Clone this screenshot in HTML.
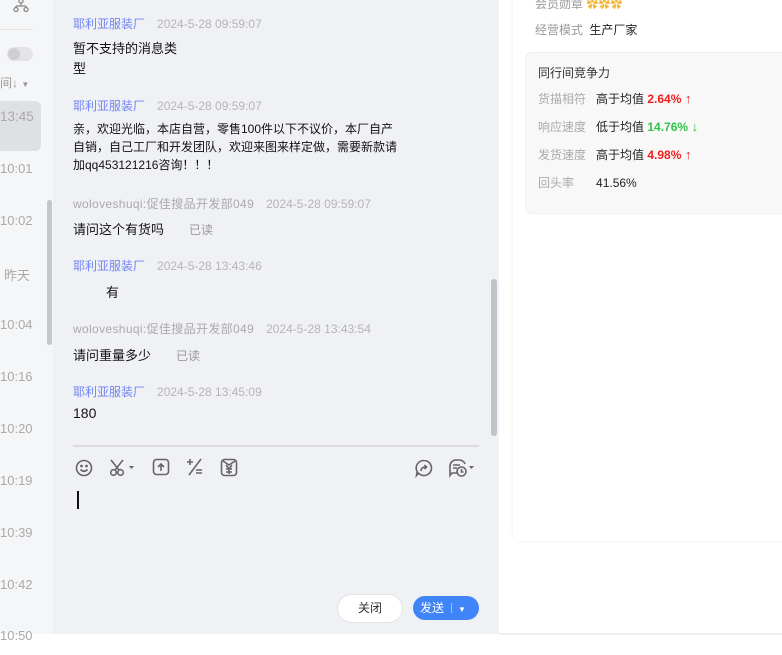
<!DOCTYPE html>
<html><head><meta charset="utf-8"><style>
*{margin:0;padding:0;box-sizing:border-box}
body{width:782px;height:655px;position:relative;overflow:hidden;background:#fff;font-family:"Liberation Sans","Noto Sans CJK SC",sans-serif}
.a{position:absolute;white-space:nowrap}
.t{font-size:13px;color:#aaa}
.n{color:#6f84f5;font-size:12px}
.h{font-size:12px;color:#b5b5b5}
.m{font-size:13px;color:#111}
.g{font-size:12px;color:#999}
.w{letter-spacing:.35px}
.ar{font-weight:bold;font-size:13px}
</style></head><body>
<div class="a" style="left:0;top:0;width:53px;height:634px;background:#f5f6f8"></div>
<svg class="a" style="left:12px;top:0" width="18" height="12" viewBox="0 0 18 12"><circle cx="9" cy="1" r="2" fill="none" stroke="#888" stroke-width="1.3"/><path d="M9 3v3M4 6h10M4 6v2M14 6v2" stroke="#888" stroke-width="1.3" fill="none"/><circle cx="4" cy="9.5" r="2" fill="none" stroke="#888" stroke-width="1.3"/><circle cx="14" cy="9.5" r="2" fill="none" stroke="#888" stroke-width="1.3"/></svg>
<div class="a" style="left:0;top:29px;width:33px;height:1px;background:#e3e3e3"></div>
<div class="a" style="left:7px;top:47px;width:26px;height:14px;border-radius:7px;background:#e4e4e6"></div>
<div class="a" style="left:8px;top:48px;width:12px;height:12px;border-radius:6px;background:#cfcfd3"></div>
<div class="a t" style="left:0;top:74px;font-size:12px;color:#999">间↓ <span style="font-size:8px">▼</span></div>
<div class="a" style="left:0;top:101px;width:41px;height:50px;border-radius:0 6px 6px 0;background:#dfe0e4"></div>
<div class="a t" style="left:0;top:109px;font-size:13.5px">13:45</div>
<div class="a t" style="left:0;top:161px;font-size:13px">10:01</div>
<div class="a t" style="left:0;top:213px;font-size:13px">10:02</div>
<div class="a t" style="left:4px;top:265px;font-size:13px">昨天</div>
<div class="a t" style="left:0;top:317px;font-size:13px">10:04</div>
<div class="a t" style="left:0;top:369px;font-size:13px">10:16</div>
<div class="a t" style="left:0;top:421px;font-size:13px">10:20</div>
<div class="a t" style="left:0;top:473px;font-size:13px">10:19</div>
<div class="a t" style="left:0;top:525px;font-size:13px">10:39</div>
<div class="a t" style="left:0;top:577px;font-size:13px">10:42</div>
<div class="a t" style="left:0;top:628px;font-size:13px">10:50</div>
<div class="a" style="left:47px;top:200px;width:5px;height:145px;border-radius:3px;background:#c4c6cc"></div>
<div class="a" style="left:53px;top:0;width:446px;height:634px;background:#f0f1f5"></div>
<div class="a" style="left:491px;top:279px;width:6px;height:157px;border-radius:3px;background:#c0c3ca"></div>
<div class="a n" style="left:73px;top:15px">耶利亚服装厂<span class="h" style="margin-left:12px">2024-5-28 09:59:07</span></div>
<div class="a m" style="left:73px;top:39px;line-height:20px">暂不支持的消息类<br>型</div>
<div class="a n" style="left:73px;top:97px">耶利亚服装厂<span class="h" style="margin-left:12px">2024-5-28 09:59:07</span></div>
<div class="a m" style="left:73px;top:120px;font-size:12px;line-height:18px">亲，欢迎光临，本店自营，零售100件以下不议价，本厂自产<br>自销，自己工厂和开发团队，欢迎来图来样定做，需要新款请<br>加qq453121216咨询！！！</div>
<div class="a h" style="left:73px;top:195px;color:#aaa"><span class="w">woloveshuqi:促佳搜品开发部049</span><span style="margin-left:12px;color:#b5b5b5">2024-5-28 09:59:07</span></div>
<div class="a m" style="left:73px;top:219px">请问这个有货吗<span class="g" style="margin-left:25px">已读</span></div>
<div class="a n" style="left:73px;top:257px">耶利亚服装厂<span class="h" style="margin-left:12px">2024-5-28 13:43:46</span></div>
<div class="a m" style="left:106px;top:282px">有</div>
<div class="a h" style="left:73px;top:320px;color:#aaa"><span class="w">woloveshuqi:促佳搜品开发部049</span><span style="margin-left:12px;color:#b5b5b5">2024-5-28 13:43:54</span></div>
<div class="a m" style="left:73px;top:345px">请问重量多少<span class="g" style="margin-left:25px">已读</span></div>
<div class="a n" style="left:73px;top:383px">耶利亚服装厂<span class="h" style="margin-left:12px">2024-5-28 13:45:09</span></div>
<div class="a m" style="left:73px;top:405px;font-size:14px">180</div>
<div class="a" style="left:73px;top:445px;width:406px;height:2px;background:#dcdcde"></div>
<svg class="a" style="left:74px;top:458px" width="20" height="20" viewBox="0 0 20 20" fill="none" stroke="#666" stroke-width="1.6"><circle cx="10" cy="10" r="7.5"/><path d="M6.5 11.5q3.5 3.5 7 0"/><circle cx="7.5" cy="8" r=".6" fill="#666"/><circle cx="12.5" cy="8" r=".6" fill="#666"/></svg>
<svg class="a" style="left:109px;top:458px" width="28" height="20" viewBox="0 0 28 20" fill="none" stroke="#666" stroke-width="1.6"><circle cx="4.5" cy="14.5" r="2.8"/><circle cx="11.5" cy="14.5" r="2.8"/><path d="M6 12L14 2M10 12L2 2"/><path d="M20 8h5l-2.5 3z" fill="#666" stroke="none"/></svg>
<svg class="a" style="left:152px;top:458px" width="18" height="19" viewBox="0 0 18 19" fill="none" stroke="#666" stroke-width="1.6"><rect x="1.5" y="1.5" width="15" height="15" rx="3"/><path d="M9 13V6M6 9l3-3 3 3"/></svg>
<svg class="a" style="left:186px;top:458px" width="18" height="18" viewBox="0 0 18 18" fill="none" stroke="#666" stroke-width="1.6"><path d="M1 4h6M4 1v6M15 1L3 17M10 12h6M10 15h6"/></svg>
<svg class="a" style="left:220px;top:458px" width="18" height="19" viewBox="0 0 18 19" fill="none" stroke="#666" stroke-width="1.6"><rect x="1.5" y="1.5" width="15" height="16" rx="3"/><path d="M3 3l6 4 6-4M6 7l3 4 3-4M9 11v5M6 11h6M6 14h6"/></svg>
<svg class="a" style="left:414px;top:458px" width="20" height="20" viewBox="0 0 20 20" fill="none" stroke="#666" stroke-width="1.6"><path d="M10 2.5a7.5 7.5 0 1 1-5.5 12.6L2.5 17.5l.6-4A7.5 7.5 0 0 1 10 2.5z"/><path d="M7 13q0-4 5-4M10.5 7l2 2-2 2"/></svg>
<svg class="a" style="left:448px;top:458px" width="30" height="20" viewBox="0 0 30 20" fill="none" stroke="#666" stroke-width="1.6"><path d="M10 15H4l-2 2.5V8a6 6 0 0 1 6-6h3a6 6 0 0 1 6 4"/><path d="M5 7h7M5 10h4"/><circle cx="13.5" cy="13.5" r="4.5"/><path d="M13.5 11v3h2"/><path d="M21 8h5l-2.5 3z" fill="#666" stroke="none"/></svg>
<div class="a" style="left:77px;top:491px;width:1.5px;height:18px;background:#111"></div>
<div class="a" style="left:337px;top:594px;width:66px;height:29px;border-radius:15px;background:#fff;border:1px solid #e2e2e2;font-size:12px;color:#333;text-align:center;line-height:27px">关闭</div>
<div class="a" style="left:413px;top:596px;width:66px;height:24px;border-radius:12px;background:#3f85f8;font-size:12px;color:#fff;line-height:24px;padding-left:7px">发送<span style="display:inline-block;width:1px;height:10px;background:#9fc0fb;margin:0 6px 0 7px;vertical-align:-1px"></span><span style="font-size:8px">▼</span></div>
<div class="a" style="left:499px;top:633px;width:283px;height:2px;background:#eeeff2"></div>
<div class="a" style="left:513px;top:-10px;width:280px;height:551px;border-radius:8px;background:#fff;box-shadow:0 0 3px rgba(0,0,0,.08)"></div>
<div class="a g" style="left:535px;top:-5px;font-size:12px;color:#999">会员勋章 <span style="color:#f1b73b">✿✿✿</span></div>
<div class="a" style="left:535px;top:21px;font-size:12px;color:#999">经营模式 <span style="color:#222;margin-left:3px">生产厂家</span></div>
<div class="a" style="left:525px;top:52px;width:270px;height:162px;border-radius:6px;background:#f8f8f9;border:1px solid #f0f0f0"></div>
<div class="a" style="left:538px;top:64px;font-size:12px;color:#333">同行间竞争力</div>
<div class="a" style="left:538px;top:90px;font-size:12px;color:#aaa">货描相符<span style="color:#222;margin-left:10px">高于均值 </span><b style="color:#f21e1e">2.64%</b><span class="ar" style="color:#f21e1e"> ↑</span></div>
<div class="a" style="left:538px;top:118px;font-size:12px;color:#aaa">响应速度<span style="color:#222;margin-left:10px">低于均值 </span><b style="color:#35c24a">14.76%</b><span class="ar" style="color:#35c24a"> ↓</span></div>
<div class="a" style="left:538px;top:146px;font-size:12px;color:#aaa">发货速度<span style="color:#222;margin-left:10px">高于均值 </span><b style="color:#f21e1e">4.98%</b><span class="ar" style="color:#f21e1e"> ↑</span></div>
<div class="a" style="left:538px;top:174px;font-size:12px;color:#aaa">回头率<span style="color:#222;margin-left:22px">41.56%</span></div>
</body></html>
